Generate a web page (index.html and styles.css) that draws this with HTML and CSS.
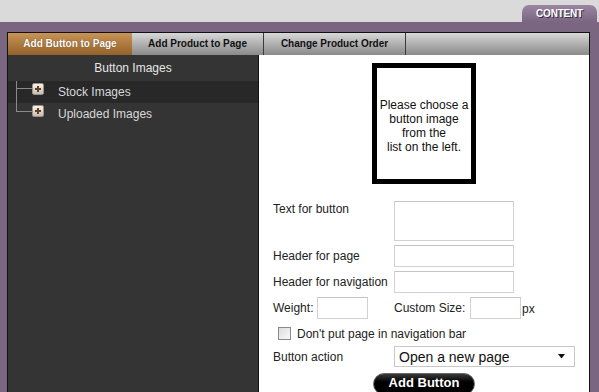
FILE: index.html
```html
<!DOCTYPE html>
<html>
<head>
<meta charset="utf-8">
<link rel="stylesheet" href="styles.css">
</head>
<body>
<div class="top">
  <div class="content-tab">CONTENT</div>
</div>
<div class="frame">
  <div class="panel">
    <div class="tabs">
      <div class="tab active t1">Add Button to Page</div>
      <div class="tab t2">Add Product to Page</div>
      <div class="tab t3">Change Product Order</div>
      <div class="tab rest"></div>
    </div>
    <div class="body">
      <div class="side">
        <div class="side-head">Button Images</div>
        <div class="tree">
          <div class="node dark">
            <span class="branch"></span>
            <span class="plus"></span>
            <span class="label">Stock Images</span>
          </div>
          <div class="node last">
            <span class="branch"></span>
            <span class="plus"></span>
            <span class="label">Uploaded Images</span>
          </div>
        </div>
      </div>
      <div class="main">
        <div class="preview">Please choose a<br>button image<br>from the<br>list on the left.</div>
        <div class="form">
          <div class="row r-text">
            <span class="lbl">Text for button</span>
            <textarea class="field area"></textarea>
          </div>
          <div class="row">
            <span class="lbl">Header for page</span>
            <input class="field" type="text">
          </div>
          <div class="row">
            <span class="lbl">Header for navigation</span>
            <input class="field" type="text">
          </div>
          <div class="row r-weight">
            <span class="lbl-w">Weight:</span>
            <input class="field small w" type="text">
            <span class="lbl-c">Custom Size:</span>
            <input class="field small" type="text">
            <span class="px">px</span>
          </div>
          <label class="row r-check">
            <span class="check"></span>
            <span>Don't put page in navigation bar</span>
          </label>
          <div class="row r-select">
            <span class="lbl">Button action</span>
            <div class="select">
              <span>Open a new page</span>
              <svg width="9" height="5" viewBox="0 0 9 5"><path d="M1 0 H8 L4.5 4.5 Z" fill="#111"/></svg>
            </div>
          </div>
          <div class="btn-row">
            <div class="add-btn">Add Button</div>
          </div>
        </div>
      </div>
    </div>
  </div>
</div>
</body>
</html>
```

FILE: styles.css
```css
* { box-sizing: border-box; }
html, body {
  margin: 0;
  padding: 0;
  width: 599px;
  height: 392px;
  overflow: hidden;
  font-family: "Liberation Sans", Arial, sans-serif;
}
body { background: #7b6682; }

.top {
  height: 22px;
  background: #dadada;
  display: flex;
  justify-content: flex-end;
  align-items: flex-end;
  padding-right: 2px;
}
.content-tab {
  width: 75px;
  height: 17px;
  border-radius: 7px 7px 0 0;
  background: linear-gradient(#9a86a2, #7b6682);
  color: #fff;
  font-size: 10px;
  font-weight: bold;
  text-align: center;
  line-height: 17px;
  letter-spacing: -0.2px;
  text-shadow: 1px 1px 0 #3a2d40;
}

.frame {
  padding: 10px 9px 0 7px;
  height: 370px;
}
.panel {
  border: 1px solid #111;
  border-bottom: none;
  height: 360px;
  display: flex;
  flex-direction: column;
}
.tabs {
  display: flex;
  height: 22px;
  flex: none;
}
.tab {
  height: 22px;
  line-height: 22px;
  text-align: center;
  font-size: 10px;
  font-weight: bold;
  color: #111;
  background: linear-gradient(#d8d8d8 0%, #b4b4b4 45%, #8a8a8a 100%);
  border-right: 1px solid #3a3a3a;
}
.tab.active {
  color: #fff;
  background: linear-gradient(#c79455 0%, #ae7a3f 50%, #93622c 100%);
  border-right: none;
  text-shadow: 0 0 1px #5a3a18;
}
.t1 { width: 124px; }
.t2 { width: 132px; }
.t3 { width: 142px; }
.rest { flex: 1; border-right: none; }

.body {
  flex: 1;
  display: flex;
}
.side {
  width: 251px;
  background: #343434;
  border-right: 1px solid #111;
}
.side-head {
  height: 26px;
  line-height: 26px;
  text-align: center;
  color: #e6e6e6;
  font-size: 12px;
}
.node {
  position: relative;
  height: 22px;
  display: flex;
  align-items: center;
  color: #d8d8d8;
  font-size: 12px;
}
.node.dark { background: #282828; }
.branch {
  position: absolute;
  left: 8px;
  top: 0;
  width: 16px;
  height: 8px;
  border-left: 1px solid #8a8a8a;
  border-bottom: 1px solid #8a8a8a;
}
.node.dark .branch { height: 22px; border-bottom: none; }
.node.dark .branch::after {
  content: "";
  position: absolute;
  left: 0;
  top: 7px;
  width: 16px;
  border-bottom: 1px solid #8a8a8a;
}
.node.last .branch { top: 0; height: 9px; }
.plus {
  position: absolute;
  left: 24px;
  top: 2px;
  width: 12px;
  height: 12px;
  background: linear-gradient(#f6f2ec, #c6beb2);
  border: 1px solid #9a9286;
  border-radius: 2px;
}
.plus::before, .plus::after {
  content: "";
  position: absolute;
  background: #6a3f22;
}
.plus::before { left: 2px; top: 4px; width: 6px; height: 2px; }
.plus::after { left: 4px; top: 2px; width: 2px; height: 6px; }
.label { margin-left: 50px; }

.main {
  flex: 1;
  background: #fff;
  display: flex;
  flex-direction: column;
  align-items: center;
  padding-top: 8px;
}
.preview {
  width: 104px;
  height: 121px;
  border: 5px solid #000;
  display: flex;
  align-items: center;
  justify-content: center;
  text-align: center;
  font-size: 12px;
  line-height: 14px;
  color: #111;
  padding-top: 5px;
}
.form {
  align-self: stretch;
  padding: 17px 0 0 14px;
  font-size: 12px;
  color: #222;
}
.row {
  display: flex;
  align-items: center;
  margin-bottom: 4px;
}
.lbl { width: 121px; flex: none; }
.r-text { align-items: flex-start; }
.r-text .lbl { padding-top: 1px; }
.field {
  width: 120px;
  height: 22px;
  border: 1px solid #d2d2d2;
  border-top-color: #c4c4c4;
  margin: 0;
  padding: 0;
  font: inherit;
  background: #fff;
}
.area { height: 40px; resize: none; display: block; }
.lbl-w { width: 44px; flex: none; }
.small { width: 51px; }
.w { margin-right: 26px; }
.lbl-c { width: 76px; flex: none; }
.px { margin-left: 1px; padding-top: 2px; }
.r-check {
  padding-left: 5px;
  height: 21px;
  margin-top: 0;
  margin-bottom: 2px;
}
.check {
  width: 13px;
  height: 13px;
  border: 1px solid #8a8a8a;
  background: linear-gradient(135deg, #dcdcdc, #fafafa);
  margin-right: 6px;
}
.r-select { margin-bottom: 6px; }
.select {
  width: 181px;
  height: 21px;
  border: 1px solid #c8c8c8;
  display: flex;
  align-items: center;
  justify-content: space-between;
  padding: 0 8px 0 4px;
  font-size: 14px;
  color: #111;
}
.btn-row {
  display: flex;
  justify-content: center;
  padding-right: 14px;
}
.add-btn {
  width: 102px;
  height: 22px;
  border-radius: 11px;
  background: linear-gradient(#3a3a3a, #000 40%);
  border: 1px solid #666;
  color: #fff;
  font-weight: bold;
  font-size: 13px;
  text-align: center;
  line-height: 18px;
}
```
